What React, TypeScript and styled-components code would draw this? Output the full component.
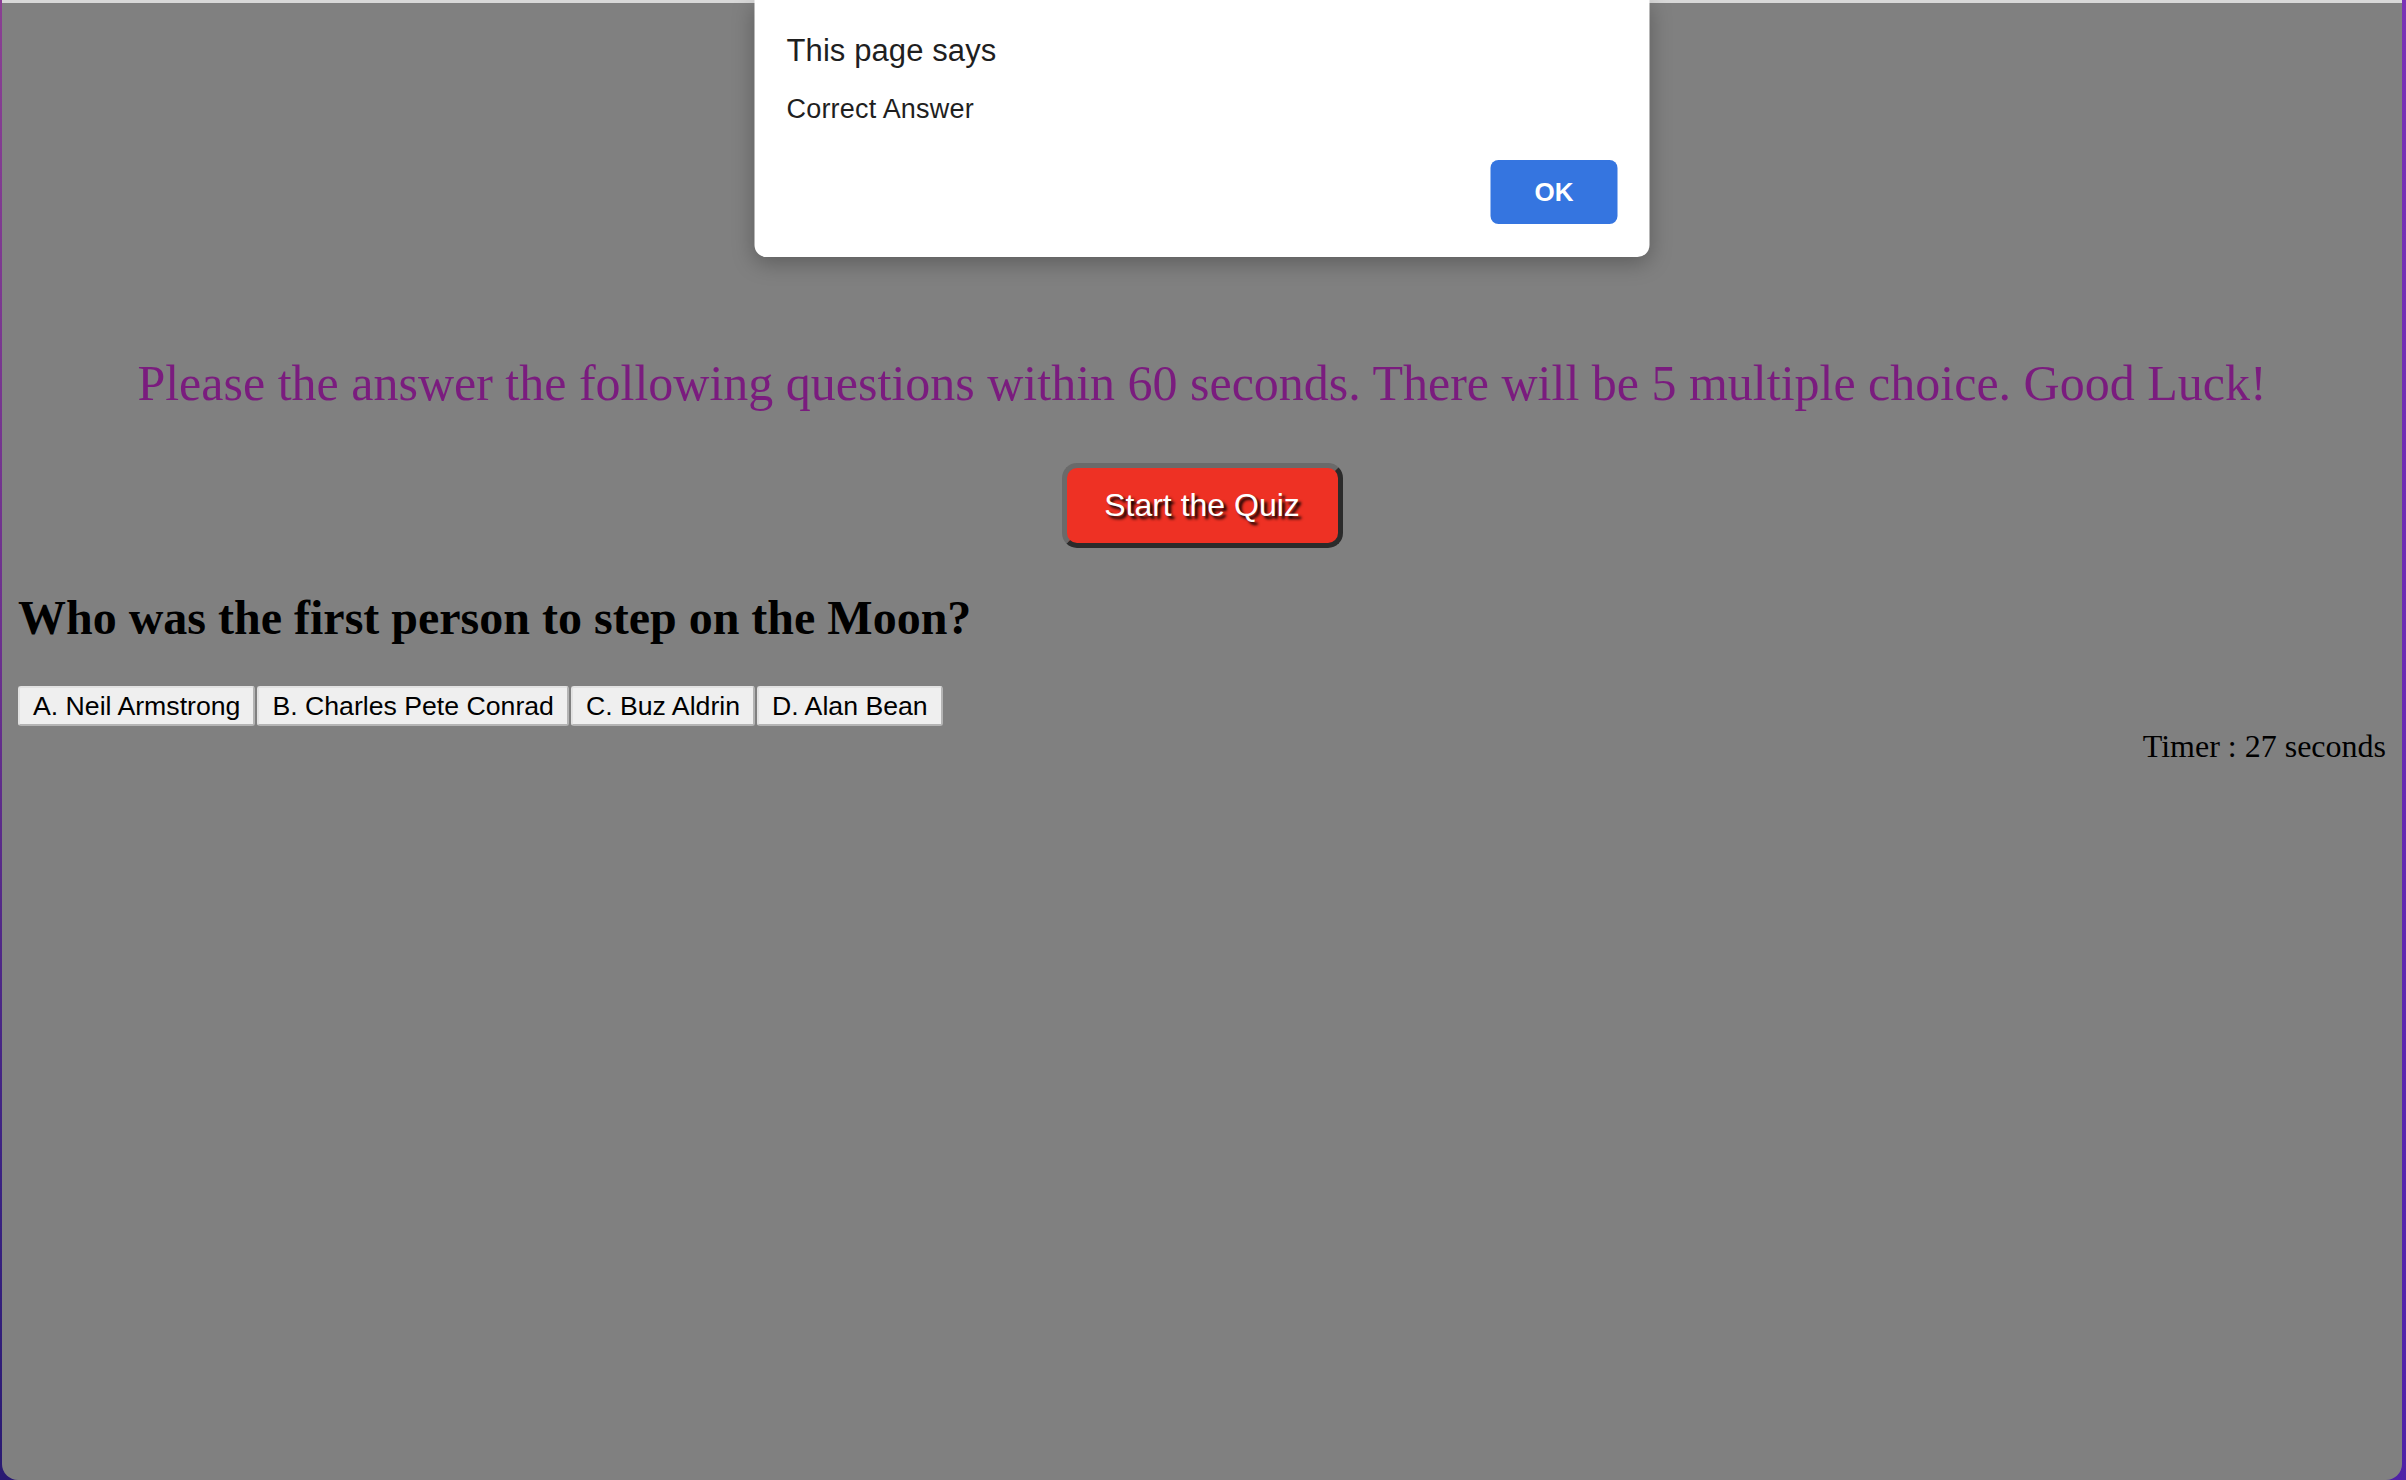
import React from "react";
import styled, { createGlobalStyle } from "styled-components";

const Global = createGlobalStyle`
  html, body {
    margin: 0;
    padding: 0;
    height: 100%;
  }
  body {
    font-family: "Liberation Serif", "Times New Roman", serif;
  }
  #root {
    height: 100%;
  }
`;

const Frame = styled.div`
  box-sizing: border-box;
  height: 1480px;
  display: flex;
  padding: 0 4px 0 2px;
  background:
    linear-gradient(to right, rgba(0, 0, 0, 0) 60%, rgba(110, 40, 210, 0.55) 100%),
    linear-gradient(to bottom, #8a3f93 0%, #6a2f8e 45%, #3a2282 80%, #2a1a72 100%);
`;

const Panel = styled.main`
  position: relative;
  flex: 1;
  box-sizing: border-box;
  background: #808080;
  border-top: 3px solid #d8d8d8;
  border-radius: 0 0 16px 16px;
  padding: 351px 16px 0;
  color: #000;
`;

const Dialog = styled.div`
  position: absolute;
  top: -3px;
  left: 50%;
  transform: translateX(-50%);
  width: 895px;
  height: 257px;
  box-sizing: border-box;
  background: #ffffff;
  border-radius: 0 0 12px 12px;
  box-shadow: 0 6px 22px rgba(0, 0, 0, 0.28);
  padding: 33px 32px 33px 32px;
  display: flex;
  flex-direction: column;
  font-family: "Liberation Sans", Arial, sans-serif;
  color: #1f1f1f;
  z-index: 10;
`;

const DialogTitle = styled.div`
  font-size: 31px;
  line-height: 36px;
  letter-spacing: 0.1px;
`;

const DialogMessage = styled.div`
  margin-top: 24px;
  font-size: 27px;
  line-height: 32px;
  letter-spacing: 0.2px;
`;

const DialogActions = styled.div`
  margin-top: auto;
  display: flex;
  justify-content: flex-end;
`;

const OkButton = styled.button`
  width: 127px;
  height: 64px;
  border: none;
  border-radius: 8px;
  background: #3575e0;
  color: #ffffff;
  font-family: "Liberation Sans", Arial, sans-serif;
  font-size: 26px;
  font-weight: 600;
  cursor: pointer;
`;

const Intro = styled.p`
  margin: 0;
  text-align: center;
  font-size: 50px;
  line-height: 58px;
  color: #7a1c7e;
`;

const StartRow = styled.div`
  display: flex;
  justify-content: center;
  margin-top: 51px;
`;

const StartButton = styled.button`
  box-sizing: border-box;
  width: 281px;
  height: 85px;
  border-width: 5px;
  border-style: solid;
  border-color: #6a6a6a #2b2b2b #2b2b2b #6a6a6a;
  border-radius: 15px;
  background: #ee3124;
  color: #ffffff;
  font-family: "Liberation Sans", Arial, sans-serif;
  font-size: 32px;
  text-shadow: 3px 3px 3px #000000;
  cursor: pointer;
  padding: 0;
`;

const Question = styled.h2`
  margin: 42px 0 0;
  font-size: 48px;
  line-height: 56px;
  font-weight: bold;
`;

const Answers = styled.div`
  display: flex;
  gap: 2px;
  margin-top: 40px;
`;

const AnswerButton = styled.button`
  box-sizing: border-box;
  height: 40px;
  padding: 0 13px;
  border-width: 2px;
  border-style: solid;
  border-color: #e2e2e2 #b4b4b4 #b4b4b4 #e2e2e2;
  border-radius: 3px;
  background: #efefef;
  color: #000;
  font-family: "Liberation Sans", Arial, sans-serif;
  font-size: 26.67px;
  cursor: pointer;
`;

const Timer = styled.div`
  margin-top: 2px;
  text-align: right;
  font-size: 32px;
  line-height: 36px;
`;

const answers = [
  "A. Neil Armstrong",
  "B. Charles Pete Conrad",
  "C. Buz Aldrin",
  "D. Alan Bean",
];

export default function App() {
  return (
    <>
      <Global />
      <Frame>
        <Panel>
          <Dialog role="alertdialog">
            <DialogTitle>This page says</DialogTitle>
            <DialogMessage>Correct Answer</DialogMessage>
            <DialogActions>
              <OkButton>OK</OkButton>
            </DialogActions>
          </Dialog>
          <Intro>
            Please the answer the following questions within 60 seconds. There will be 5
            multiple choice. Good Luck!
          </Intro>
          <StartRow>
            <StartButton>Start the Quiz</StartButton>
          </StartRow>
          <Question>Who was the first person to step on the Moon?</Question>
          <Answers>
            {answers.map((a) => (
              <AnswerButton key={a}>{a}</AnswerButton>
            ))}
          </Answers>
          <Timer>Timer : 27 seconds</Timer>
        </Panel>
      </Frame>
    </>
  );
}
